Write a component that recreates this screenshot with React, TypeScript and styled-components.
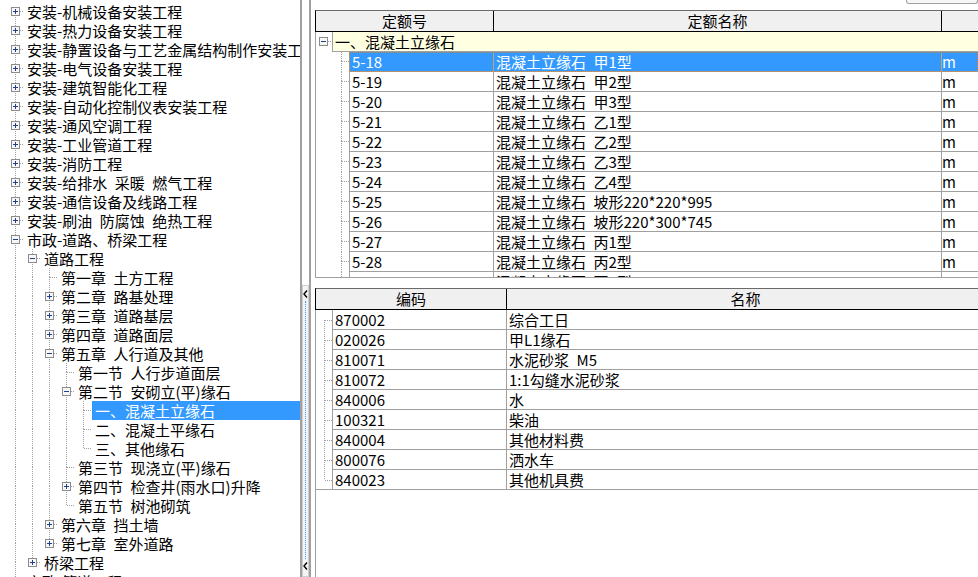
import React from 'react';
import styled, { createGlobalStyle, css } from 'styled-components';

const LINE = '#a0a0a0';
const SELECT = '#3399ff';
const SP = '\u2002';

const GlobalStyle = createGlobalStyle`
  html, body {
    margin: 0;
    padding: 0;
    background: #ffffff;
  }
  body {
    font-family: "Noto Sans CJK SC", "Noto Sans", sans-serif;
    font-size: 15px;
    color: #000000;
    overflow: hidden;
  }
  * {
    box-sizing: border-box;
  }
`;

const Frame = styled.div`
  display: flex;
  width: 978px;
  height: 577px;
  overflow: hidden;
`;

// connector lines of tree views (tree panel and grid leads)
const Lines = styled.svg`
  display: block;
  flex: none;
  shape-rendering: crispEdges;

  line {
    stroke: ${LINE};
    stroke-width: 1;
    stroke-dasharray: 1 1;
  }
  .box {
    fill: #f7f7f7;
    stroke: #8c8c8c;
    stroke-dasharray: none;
  }
  .sign {
    stroke: #1f3f8f;
    stroke-dasharray: none;
  }
`;

type ConnectorProps = {
  w: number;
  h: number;
  cx: number;
  cy: number;
  up?: boolean;
  down?: boolean;
  tick?: boolean;
  box?: 'plus' | 'minus';
};

function Connector({ w, h, cx, cy, up, down, tick, box }: ConnectorProps) {
  const x = cx + 0.5;
  const y = cy + 0.5;
  return (
    <Lines width={w} height={h} viewBox={`0 0 ${w} ${h}`}>
      {up && <line x1={x} y1={0} x2={x} y2={cy} />}
      {down && <line x1={x} y1={cy} x2={x} y2={h} />}
      {tick && <line x1={cx + 1} y1={y} x2={w} y2={y} />}
      {box && (
        <>
          <rect className="box" x={cx - 3.5} y={cy - 3.5} width={8} height={8} />
          <line className="sign" x1={cx - 2} y1={y} x2={cx + 3} y2={y} />
          {box === 'plus' && <line className="sign" x1={x} y1={cy - 2} x2={x} y2={cy + 3} />}
        </>
      )}
    </Lines>
  );
}

/* ---------------- tree ---------------- */

type TreeNode = { text: string; level: number; state?: 'plus' | 'minus'; selected?: boolean };

const treeNodes: TreeNode[] = [
  { text: '安装-机械设备安装工程', level: 0, state: 'plus' },
  { text: '安装-热力设备安装工程', level: 0, state: 'plus' },
  { text: '安装-静置设备与工艺金属结构制作安装工程', level: 0, state: 'plus' },
  { text: '安装-电气设备安装工程', level: 0, state: 'plus' },
  { text: '安装-建筑智能化工程', level: 0, state: 'plus' },
  { text: '安装-自动化控制仪表安装工程', level: 0, state: 'plus' },
  { text: '安装-通风空调工程', level: 0, state: 'plus' },
  { text: '安装-工业管道工程', level: 0, state: 'plus' },
  { text: '安装-消防工程', level: 0, state: 'plus' },
  { text: `安装-给排水${SP}采暖${SP}燃气工程`, level: 0, state: 'plus' },
  { text: '安装-通信设备及线路工程', level: 0, state: 'plus' },
  { text: `安装-刷油${SP}防腐蚀${SP}绝热工程`, level: 0, state: 'plus' },
  { text: '市政-道路、桥梁工程', level: 0, state: 'minus' },
  { text: '道路工程', level: 1, state: 'minus' },
  { text: `第一章${SP}土方工程`, level: 2 },
  { text: `第二章${SP}路基处理`, level: 2, state: 'plus' },
  { text: `第三章${SP}道路基层`, level: 2, state: 'plus' },
  { text: `第四章${SP}道路面层`, level: 2, state: 'plus' },
  { text: `第五章${SP}人行道及其他`, level: 2, state: 'minus' },
  { text: `第一节${SP}人行步道面层`, level: 3 },
  { text: `第二节${SP}安砌立(平)缘石`, level: 3, state: 'minus' },
  { text: '一、混凝土立缘石', level: 4, selected: true },
  { text: '二、混凝土平缘石', level: 4 },
  { text: '三、其他缘石', level: 4 },
  { text: `第三节${SP}现浇立(平)缘石`, level: 3 },
  { text: `第四节${SP}检查井(雨水口)升降`, level: 3, state: 'plus' },
  { text: `第五节${SP}树池砌筑`, level: 3 },
  { text: `第六章${SP}挡土墙`, level: 2, state: 'plus' },
  { text: `第七章${SP}室外道路`, level: 2, state: 'plus' },
  { text: '桥梁工程', level: 1, state: 'plus' },
  { text: '市政-管道工程', level: 0, state: 'plus' },
];

function hasNext(i: number) {
  const level = treeNodes[i].level;
  for (let j = i + 1; j < treeNodes.length; j++) {
    if (treeNodes[j].level < level) return false;
    if (treeNodes[j].level === level) return true;
  }
  return level === 0; // more roots below the fold
}

function passesThrough(i: number, level: number) {
  for (let j = i - 1; j >= 0; j--) {
    if (treeNodes[j].level === level) return hasNext(j);
  }
  return false;
}

const TreePanel = styled.div`
  flex: none;
  width: 302px;
  height: 100%;
  padding: 2px 0 0 6px;
  border-right: 2px solid ${LINE};
  overflow: hidden;
`;

const TreeRow = styled.div`
  display: flex;
  height: 19px;
`;

const TreeLabel = styled.span<{ $selected?: boolean }>`
  flex: 1;
  min-width: 0;
  margin-left: 1px;
  padding-left: 3px;
  line-height: 19px;
  white-space: pre;
  overflow: hidden;
  ${(p) =>
    p.$selected &&
    css`
      background: ${SELECT};
      color: #ffffff;
    `}
`;

function Tree() {
  return (
    <TreePanel>
      {treeNodes.map((n, i) => (
        <TreeRow key={i}>
          {Array.from({ length: n.level }, (_, k) => {
            const through = passesThrough(i, k);
            return <Connector key={k} w={17} h={19} cx={9} cy={9} up={through} down={through} />;
          })}
          <Connector w={17} h={19} cx={9} cy={9} up={i > 0} down={hasNext(i)} tick box={n.state} />
          <TreeLabel $selected={n.selected}>{n.text}</TreeLabel>
        </TreeRow>
      ))}
    </TreePanel>
  );
}

/* ---------------- splitter ---------------- */

const Splitter = styled.div`
  flex: none;
  width: 9px;
  height: 100%;
  display: flex;
  flex-direction: column;
  border-right: 2px solid ${LINE};
`;

const SplitterHandle = styled.div`
  flex: 1;
  margin-top: 285px;
  display: flex;
  flex-direction: column;
  align-items: center;
  padding: 4px 0 6px;
  border: 1px solid #cfcfcf;
  background: #f4f4f4;
`;

const Dots = styled.div`
  flex: 1;
  width: 0;
  margin: 3px 0;
  border-left: 1px dotted ${SELECT};
`;

function Chevron() {
  return (
    <svg width={5} height={8} viewBox="0 0 5 8">
      <polyline points="4,0.5 1,4 4,7.5" fill="none" stroke="#000" strokeWidth={1.4} />
    </svg>
  );
}

/* ---------------- grids ---------------- */

const Workspace = styled.div`
  flex: 1;
  min-width: 0;
  height: 100%;
  display: flex;
  flex-direction: column;
  padding-left: 4px;
`;

const Toolbar = styled.div`
  flex: none;
  height: 10px;
  display: flex;
  justify-content: flex-end;
  align-items: flex-start;
`;

const ToolButton = styled.div`
  width: 72px;
  height: 4px;
  border: 1px solid ${LINE};
  border-top: 0;
  border-radius: 0 0 3px 3px;
  background: #f6f6f6;
`;

const GridBox = styled.div<{ $fill?: boolean }>`
  display: flex;
  flex-direction: column;
  overflow: hidden;
  ${(p) =>
    p.$fill
      ? css`
          flex: 1;
          margin-top: 10px;
        `
      : css`
          flex: none;
          height: 268px;
        `}
`;

const HeaderRow = styled.div`
  flex: none;
  display: flex;
  height: 22px;
  background: #f0f0f0;
  border-top: 1px solid #6a6a6a;
  border-bottom: 1px solid #000000;
  border-left: 1px solid #000000;
`;

const HeaderCell = styled.div<{ $w: number }>`
  flex: 0 0 ${(p) => p.$w}px;
  border-right: 1px solid #000000;
  text-align: center;
  line-height: 20px;
  white-space: nowrap;
`;

const GridBody = styled.div<{ $closed?: boolean }>`
  flex: 1;
  min-height: 0;
  overflow: hidden;
  border-left: 1px solid ${LINE};
  ${(p) => p.$closed && css`border-bottom: 1px solid ${LINE};`}
`;

const Row = styled.div`
  display: flex;
  height: 20px;
`;

const Lead = styled.div<{ $ruled?: boolean }>`
  flex: none;
  ${(p) => p.$ruled && css`border-bottom: 1px solid ${LINE};`}
`;

const GroupCell = styled.div`
  flex: 1;
  padding-left: 2px;
  line-height: 19px;
  white-space: pre;
  background: #ffffe1;
  border-left: 1px solid ${LINE};
  border-bottom: 1px solid ${LINE};
`;

const Cells = styled.div<{ $selected?: boolean }>`
  flex: 1;
  display: flex;
  min-width: 0;
  border-left: 1px solid ${LINE};
  border-bottom: 1px solid ${LINE};
  ${(p) =>
    p.$selected &&
    css`
      background: ${SELECT};
      color: #ffffff;
      outline: 1px dotted #c8843c;
      outline-offset: -1px;
      & > div {
        border-right-color: #c8a070;
      }
    `}
`;

const Cell = styled.div<{ $w?: number; $unit?: boolean }>`
  flex: ${(p) => (p.$w ? `0 0 ${p.$w}px` : '1 0 auto')};
  padding-left: ${(p) => (p.$unit ? 0 : 2)}px;
  line-height: 19px;
  white-space: pre;
  overflow: hidden;
  ${(p) => p.$w && css`border-right: 1px solid ${LINE};`}
`;

const quotaRows = [
  ['5-18', `混凝土立缘石${SP}甲1型`],
  ['5-19', `混凝土立缘石${SP}甲2型`],
  ['5-20', `混凝土立缘石${SP}甲3型`],
  ['5-21', `混凝土立缘石${SP}乙1型`],
  ['5-22', `混凝土立缘石${SP}乙2型`],
  ['5-23', `混凝土立缘石${SP}乙3型`],
  ['5-24', `混凝土立缘石${SP}乙4型`],
  ['5-25', `混凝土立缘石${SP}坡形220*220*995`],
  ['5-26', `混凝土立缘石${SP}坡形220*300*745`],
  ['5-27', `混凝土立缘石${SP}丙1型`],
  ['5-28', `混凝土立缘石${SP}丙2型`],
  ['5-29', `混凝土立缘石${SP}丙3型`],
];

const materialRows = [
  ['870002', '综合工日'],
  ['020026', '甲L1缘石'],
  ['810071', `水泥砂浆${SP}M5`],
  ['810072', '1:1勾缝水泥砂浆'],
  ['840006', '水'],
  ['100321', '柴油'],
  ['840004', '其他材料费'],
  ['800076', '洒水车'],
  ['840023', '其他机具费'],
];

function QuotaGrid() {
  return (
    <GridBox>
      <HeaderRow>
        <HeaderCell $w={178}>定额号</HeaderCell>
        <HeaderCell $w={448}>定额名称</HeaderCell>
        <HeaderCell $w={80} />
      </HeaderRow>
      <GridBody $closed>
        <Row>
          <Lead>
            <Connector w={16} h={20} cx={7} cy={9} tick box="minus" />
          </Lead>
          <GroupCell>一、混凝土立缘石</GroupCell>
        </Row>
        {quotaRows.map(([code, name], i) => (
          <Row key={code}>
            <Lead>
              <Connector w={33} h={20} cx={25} cy={9} up down tick />
            </Lead>
            <Cells $selected={i === 0}>
              <Cell $w={144}>{code}</Cell>
              <Cell $w={448}>{name}</Cell>
              <Cell $unit>m</Cell>
            </Cells>
          </Row>
        ))}
      </GridBody>
    </GridBox>
  );
}

function MaterialGrid() {
  const last = materialRows.length - 1;
  return (
    <GridBox $fill>
      <HeaderRow>
        <HeaderCell $w={191}>编码</HeaderCell>
        <HeaderCell $w={478}>名称</HeaderCell>
      </HeaderRow>
      <GridBody>
        {materialRows.map(([code, name], i) => (
          <Row key={code}>
            <Lead $ruled={i === last}>
              <Connector w={16} h={i === last ? 19 : 20} cx={8} cy={10} up={i > 0} down={i < last} tick />
            </Lead>
            <Cells>
              <Cell $w={174}>{code}</Cell>
              <Cell>{name}</Cell>
            </Cells>
          </Row>
        ))}
      </GridBody>
    </GridBox>
  );
}

export default function App() {
  return (
    <>
      <GlobalStyle />
      <Frame>
        <Tree />
        <Splitter>
          <SplitterHandle>
            <Chevron />
            <Dots />
            <Chevron />
          </SplitterHandle>
        </Splitter>
        <Workspace>
          <Toolbar>
            <ToolButton />
          </Toolbar>
          <QuotaGrid />
          <MaterialGrid />
        </Workspace>
      </Frame>
    </>
  );
}
